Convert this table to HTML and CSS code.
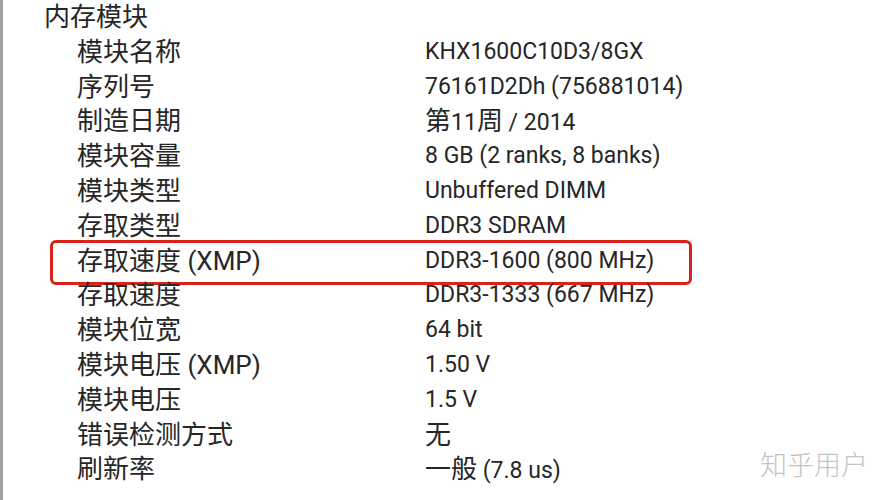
FILE: index.html
```html
<!DOCTYPE html>
<html lang="zh-CN">
<head>
    <meta charset="UTF-8">
    <title>内存模块</title>
    <link rel="stylesheet" href="styles.css">
</head>
<body>
    <div class="frame">
        <div class="group-title">内存模块</div>
        <div class="row"><span class="label">模块名称</span><span class="value">KHX1600C10D3/8GX</span></div>
        <div class="row"><span class="label">序列号</span><span class="value">76161D2Dh (756881014)</span></div>
        <div class="row"><span class="label">制造日期</span><span class="value"><span class="zh">第</span>11<span class="zh">周</span> / 2014</span></div>
        <div class="row"><span class="label">模块容量</span><span class="value">8 GB (2 ranks, 8 banks)</span></div>
        <div class="row"><span class="label">模块类型</span><span class="value">Unbuffered DIMM</span></div>
        <div class="row"><span class="label">存取类型</span><span class="value">DDR3 SDRAM</span></div>
        <div class="row marked"><span class="label">存取速度 (XMP)</span><span class="value">DDR3-1600 (800 MHz)</span></div>
        <div class="row"><span class="label">存取速度</span><span class="value">DDR3-1333 (667 MHz)</span></div>
        <div class="row"><span class="label">模块位宽</span><span class="value">64 bit</span></div>
        <div class="row"><span class="label">模块电压 (XMP)</span><span class="value">1.50 V</span></div>
        <div class="row"><span class="label">模块电压</span><span class="value">1.5 V</span></div>
        <div class="row"><span class="label">错误检测方式</span><span class="value"><span class="zh">无</span></span></div>
        <div class="row"><span class="label">刷新率</span><span class="value"><span class="zh">一般</span> (7.8 us)</span></div>
        <div class="watermark">知乎用户</div>
    </div>
</body>
</html>
```

FILE: styles.css
```css
* {
    margin: 0;
    padding: 0;
    box-sizing: border-box;
}

body {
    background: #fff;
    font-family: Roboto, "Noto Sans CJK SC", sans-serif;
    color: #262626;
    overflow: hidden;
}

.frame {
    position: relative;
    height: 500px;
    border-left: 3px solid #a4a4a4;
    padding-left: 41px;
    font-size: 26px;
    line-height: 34.8px;
}

.group-title {
    height: 34.8px;
}

.row {
    position: relative;
    display: grid;
    grid-template-columns: 348px auto;
    padding-left: 33px;
    height: 34.8px;
}

.row .label {
    font-size: 26px;
}

.row .value {
    font-size: 23px;
}

.value .zh {
    font-size: 26px;
}

.row.marked::after {
    content: "";
    position: absolute;
    left: 6px;
    width: 636px;
    top: -4px;
    bottom: -7px;
    border: 3.5px solid #d8221a;
    border-radius: 6px;
}

.watermark {
    position: absolute;
    right: 24px;
    bottom: 18px;
    font-family: "Noto Sans CJK SC", sans-serif;
    font-weight: 300;
    font-size: 27px;
    color: #c4c4c4;
}
```
